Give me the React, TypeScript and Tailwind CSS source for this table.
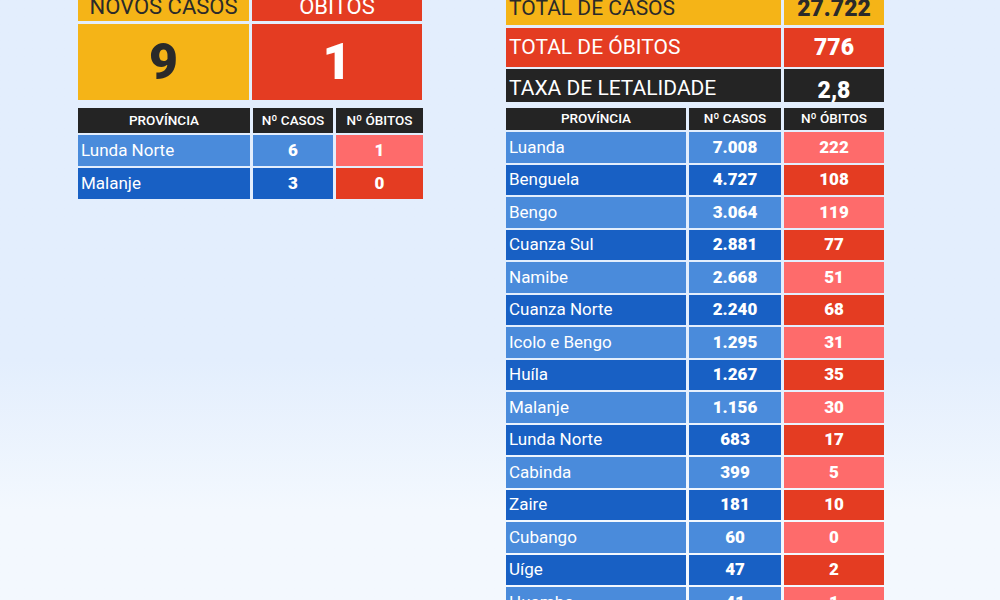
import React from 'react';

type Row = { name: string; casos: string; obitos: string };

const national: Row[] = [
  { name: 'Luanda', casos: '7.008', obitos: '222' },
  { name: 'Benguela', casos: '4.727', obitos: '108' },
  { name: 'Bengo', casos: '3.064', obitos: '119' },
  { name: 'Cuanza Sul', casos: '2.881', obitos: '77' },
  { name: 'Namibe', casos: '2.668', obitos: '51' },
  { name: 'Cuanza Norte', casos: '2.240', obitos: '68' },
  { name: 'Icolo e Bengo', casos: '1.295', obitos: '31' },
  { name: 'Huíla', casos: '1.267', obitos: '35' },
  { name: 'Malanje', casos: '1.156', obitos: '30' },
  { name: 'Lunda Norte', casos: '683', obitos: '17' },
  { name: 'Cabinda', casos: '399', obitos: '5' },
  { name: 'Zaire', casos: '181', obitos: '10' },
  { name: 'Cubango', casos: '60', obitos: '0' },
  { name: 'Uíge', casos: '47', obitos: '2' },
  { name: 'Huambo', casos: '41', obitos: '1' },
];

const today: Row[] = [
  { name: 'Lunda Norte', casos: '6', obitos: '1' },
  { name: 'Malanje', casos: '3', obitos: '0' },
];

const TableRow: React.FC<{ row: Row; index: number; cols: string; height: string }> = ({ row, index, cols, height }) => {
  const light = index % 2 === 0;
  return (
    <div className={`grid ${cols} gap-x-[3px] ${height} leading-none`}>
      <div className={`flex items-center pl-[3px] text-[17px] text-white ${light ? 'bg-[#4a8bdb]' : 'bg-[#1860c4]'}`}>
        {row.name}
      </div>
      <div className={`flex items-center justify-center text-[17px] font-black text-white ${light ? 'bg-[#4a8bdb]' : 'bg-[#1860c4]'}`}>
        {row.casos}
      </div>
      <div className={`flex items-center justify-center text-[17px] font-black text-white ${light ? 'bg-[#fe6b6b]' : 'bg-[#e43c22]'}`}>
        {row.obitos}
      </div>
    </div>
  );
};

const Header: React.FC<{ cols: string; height: string }> = ({ cols, height }) => (
  <div className={`grid ${cols} gap-x-[3px] ${height} leading-none text-[13.5px] font-medium text-white`}>
    <div className="flex items-center justify-center bg-[#242424]">PROVÍNCIA</div>
    <div className="flex items-center justify-center bg-[#242424]">Nº CASOS</div>
    <div className="flex items-center justify-center bg-[#242424]">Nº ÓBITOS</div>
  </div>
);

export default function App() {
  return (
    <div
      className="w-[1000px] h-[600px] overflow-hidden bg-gradient-to-b from-[#e3eefd] from-60% to-[#f3f8fe] to-85%"
      style={{ fontFamily: 'Roboto, "Liberation Sans", sans-serif' }}
    >
      <div className="flex items-start pl-[78px] gap-x-[82px]">
        {/* left: daily */}
        <div className="w-[346px] -mt-[19px] flex flex-col leading-none">
          <div className="grid grid-cols-[171px_170px] gap-x-[3px] h-[40px]">
            <div className="bg-[#f5b417] flex items-center justify-center text-[22px] text-[#2a2a2a] pt-[11px]">NOVOS CASOS</div>
            <div className="bg-[#e43c22] flex items-center justify-center text-[22px] text-white pt-[11px]">ÓBITOS</div>
          </div>
          <div className="grid grid-cols-[171px_170px] gap-x-[3px] mt-[3px] h-[76px]">
            <div className="bg-[#f5b417] flex items-center justify-center text-[50px] font-black text-[#2a2a2a]">9</div>
            <div className="bg-[#e43c22] flex items-center justify-center text-[50px] font-black text-white">1</div>
          </div>
          <div className="mt-[8px] flex flex-col gap-y-[2px]">
            <Header cols="grid-cols-[172px_80px_87px]" height="h-[25px]" />
            {today.map((r, i) => (
              <TableRow key={r.name} row={r} index={i} cols="grid-cols-[172px_80px_87px]" height="h-[31px]" />
            ))}
          </div>
        </div>

        {/* right: totals */}
        <div className="w-[378px] -mt-[14px] flex flex-col leading-none">
          <div className="grid grid-cols-[275px_100px] gap-x-[3px] h-[39px]">
            <div className="bg-[#f5b417] flex items-center pl-[3px] pt-[6px] text-[21px] text-[#2a2a2a]">TOTAL DE CASOS</div>
            <div className="bg-[#f5b417] flex items-center justify-center pt-[6px] text-[23px] font-black text-[#2a2a2a]">27.722</div>
          </div>
          <div className="grid grid-cols-[275px_100px] gap-x-[3px] h-[39px] mt-[3px]">
            <div className="bg-[#e43c22] flex items-center pl-[3px] text-[21px] text-white">TOTAL DE ÓBITOS</div>
            <div className="bg-[#e43c22] flex items-center justify-center text-[23px] font-black text-white">776</div>
          </div>
          <div className="grid grid-cols-[275px_100px] gap-x-[3px] h-[33px] mt-[2px]">
            <div className="bg-[#242424] flex items-center pl-[3px] pt-[5px] text-[21px] text-white">TAXA DE LETALIDADE</div>
            <div className="bg-[#242424] flex items-center justify-center pt-[9px] text-[23px] font-black text-white">2,8</div>
          </div>
          <div className="mt-[6px] flex flex-col gap-y-[2px]">
            <Header cols="grid-cols-[180px_92px_100px]" height="h-[22px]" />
            {national.map((r, i) => (
              <TableRow key={r.name} row={r} index={i} cols="grid-cols-[180px_92px_100px]" height="h-[30.5px]" />
            ))}
          </div>
        </div>
      </div>
    </div>
  );
}
